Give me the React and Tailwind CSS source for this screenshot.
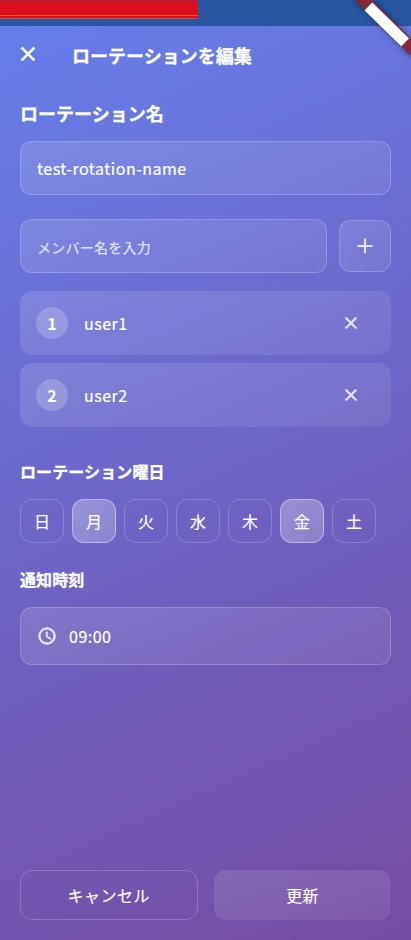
import React from "react";

const days = [
  { label: "日", on: false },
  { label: "月", on: true },
  { label: "火", on: false },
  { label: "水", on: false },
  { label: "木", on: false },
  { label: "金", on: true },
  { label: "土", on: false },
];

const CLOSE =
  "M19 6.41 17.59 5 12 10.59 6.41 5 5 6.41 10.59 12 5 17.59 6.41 19 12 13.41 17.59 19 19 17.59 13.41 12z";

function CloseIcon({ className }) {
  return (
    <svg viewBox="0 0 24 24" fill="currentColor" stroke="currentColor" strokeWidth="0.7" className={className}>
      <path d={CLOSE} />
    </svg>
  );
}

function StatusBar() {
  return (
    <div className="h-[26px] shrink-0 bg-[#2956a0]">
      <div className="flex h-[19px] w-[198px] flex-col bg-[#da0e20]">
        <div className="h-px bg-[#a82b4a]" />
        <div className="h-[14px]" />
        <div className="h-px bg-[#ee5a1c]" />
        <div className="h-[2px]" />
        <div className="h-px bg-[#b5662e]" />
      </div>
    </div>
  );
}

function Banner() {
  return (
    <svg className="absolute top-0 right-0 h-16 w-[72px]" viewBox="339 0 72 64">
      <defs>
        <filter id="shade" x="-30%" y="-30%" width="160%" height="160%">
          <feGaussianBlur stdDeviation="3" />
        </filter>
      </defs>
      <path d="M352-3 414 59V42L369-3z" fill="#000" opacity=".5" filter="url(#shade)" />
      <path d="M352-3 414 59V42L369-3z" fill="#84283c" />
      <path d="M364.5 10.5 372.3 2.5 409 38.5 401.3 46.3z" fill="#fff" />
    </svg>
  );
}

function Member({ index, name }) {
  return (
    <div className="flex h-16 items-center rounded-xl bg-linear-[160deg] from-white/13 to-white/7 pl-4">
      <div className="flex size-8 items-center justify-center rounded-full bg-white/20 text-base font-bold">
        {index}
      </div>
      <span className="ml-4 flex-1 text-base font-normal tracking-[0.5px] [-webkit-text-stroke:0.2px_white]">{name}</span>
      <CloseIcon className="mr-[30px] size-5 text-white/80" />
    </div>
  );
}

export default function App() {
  return (
    <div className="relative flex h-[940px] w-[411px] flex-col overflow-hidden font-['Noto_Sans_CJK_JP',sans-serif] text-white">
      <StatusBar />
      <main className="flex flex-1 flex-col bg-linear-[155.8deg] from-[#667eea] to-[#764ba2] px-5 pb-5">
        <header className="flex h-14 items-center">
          <CloseIcon className="-ml-1 size-6" />
          <h1 className="ml-8 pt-px text-lg leading-6 font-bold [-webkit-text-stroke:0.3px_white]">ローテーションを編集</h1>
        </header>

        <h2 className="mt-[19px] text-lg leading-6 font-bold [-webkit-text-stroke:0.3px_white]">ローテーション名</h2>
        <div className="mt-4 flex h-[54px] items-center rounded-xl border border-white/20 bg-linear-[160deg] from-white/13 to-white/7 px-4 text-base font-normal tracking-[0.5px] [-webkit-text-stroke:0.2px_white]">
          test-rotation-name
        </div>

        <div className="mt-6 flex items-center gap-3">
          <div className="flex h-[54px] flex-1 items-center rounded-xl border border-white/20 bg-linear-[160deg] from-white/13 to-white/7 px-4 pt-px text-sm font-medium tracking-[0.25px] text-white/75">
            メンバー名を入力
          </div>
          <button className="flex size-[52px] items-center justify-center rounded-xl border border-white/20 bg-linear-[135deg] from-white/13 to-white/7">
            <svg viewBox="0 0 24 24" className="size-6 text-white/80" fill="currentColor">
              <path d="M19.5 13H13v6.5h-2V13H4.5v-2H11V4.5h2V11h6.5z" />
            </svg>
          </button>
        </div>

        <div className="mt-[18px] flex flex-col gap-2">
          <Member index={1} name="user1" />
          <Member index={2} name="user2" />
        </div>

        <h2 className="mt-8 text-base leading-6 font-bold tracking-[0.1px] [-webkit-text-stroke:0.3px_white]">ローテーション曜日</h2>
        <div className="mt-4 flex gap-2">
          {days.map((d) => (
            <button
              key={d.label}
              className={
                d.on
                  ? "flex size-11 items-center justify-center rounded-xl border border-white/40 bg-linear-[135deg] from-white/30 to-white/20 text-base font-normal [-webkit-text-stroke:0.15px_white]"
                  : "flex size-11 items-center justify-center rounded-xl border border-white/20 text-base font-normal [-webkit-text-stroke:0.15px_white]"
              }
            >
              {d.label}
            </button>
          ))}
        </div>

        <h2 className="mt-6 text-base leading-6 font-bold tracking-[0.1px] [-webkit-text-stroke:0.3px_white]">通知時刻</h2>
        <div className="mt-4 flex h-[58px] items-center gap-3 rounded-xl border border-white/20 bg-linear-[160deg] from-white/13 to-white/7 px-4 text-base font-normal">
          <svg viewBox="0 0 24 24" className="size-5 text-white/80" fill="currentColor" stroke="currentColor" strokeWidth="0.8">
            <path d="M11.99 2C6.47 2 2 6.48 2 12s4.47 10 9.99 10C17.52 22 22 17.52 22 12S17.52 2 11.99 2zM12 20c-4.42 0-8-3.58-8-8s3.58-8 8-8 8 3.58 8 8-3.58 8-8 8zm.5-13H11v6l5.25 3.15.75-1.23-4.5-2.67z" />
          </svg>
          <span className="tracking-[0.5px] [-webkit-text-stroke:0.2px_white]">09:00</span>
        </div>

        <div className="mt-auto grid grid-cols-2 gap-4">
          <button className="flex h-[50px] items-center justify-center rounded-xl border border-white/20 text-base font-normal tracking-[0.5px] [-webkit-text-stroke:0.15px_white]">
            キャンセル
          </button>
          <button className="flex h-[50px] items-center justify-center rounded-xl bg-linear-[165deg] from-white/12 to-white/8 text-base font-normal [-webkit-text-stroke:0.15px_white]">
            更新
          </button>
        </div>
      </main>
      <Banner />
    </div>
  );
}
